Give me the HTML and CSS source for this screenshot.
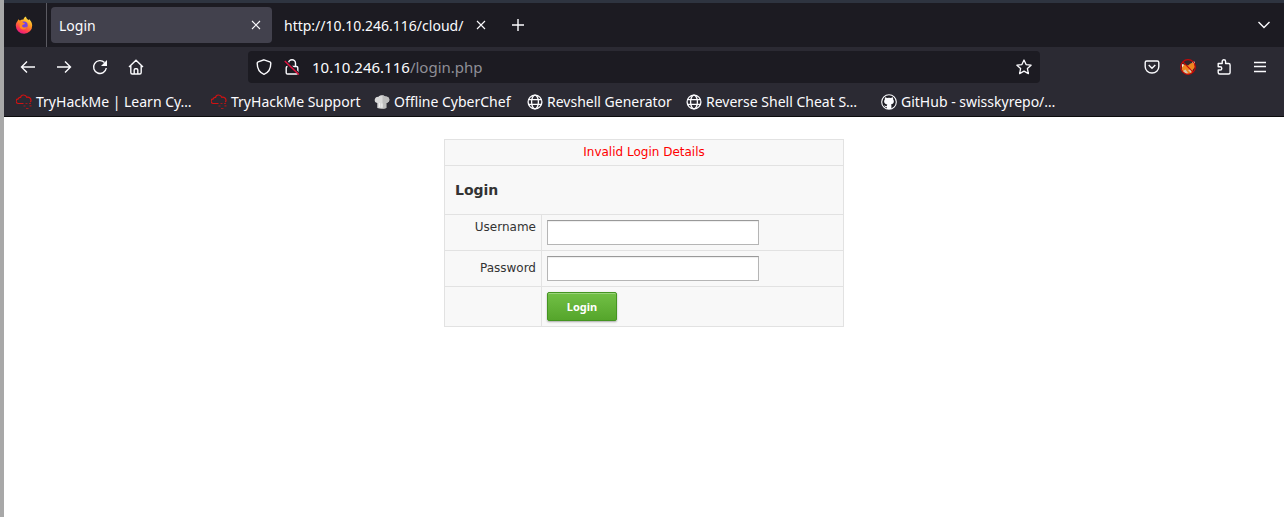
FILE: index.html
```html
<!DOCTYPE html>
<html lang="en">
<head>
<meta charset="utf-8">
<title>Login</title>
<link rel="stylesheet" href="styles.css">
</head>
<body>
<svg class="defs" aria-hidden="true">
  <symbol id="thm" viewBox="0 0 16 16"><g fill="none" stroke="#d01212" stroke-width="1.200"><path d="M7.500 9.500H2.500a2.300 2.300 0 0 1-.2-4.600 2 2 0 0 1 2.300-1.500C5 .5 9.500 0 10.800 3.300c2.200-.6 4.200.8 4.200 3.200q0 1-.8 1.500"/><path d="M9.500 9.500h2M13 9.500h2M7.500 12h2M13.500 11.800h2M10 14.500h2.500" opacity=".75"/></g></symbol>
  <symbol id="globe" viewBox="0 0 16 16"><g fill="none" stroke="#fbfbfe" stroke-width="1.300"><circle cx="8" cy="8" r="6.900"/><ellipse cx="8" cy="8" rx="3.400" ry="6.900"/><path d="M1.500 5.700h13M1.500 10.300h13"/></g></symbol>
  <symbol id="close" viewBox="0 0 10 10"><path d="M1 1l8 8M9 1L1 9" fill="none" stroke="#fbfbfe" stroke-width="1.100"/></symbol>
</svg>
<div class="window">
  <header class="browser">
    <div class="tabs">
      <div class="view">
        <svg width="18" height="18" viewBox="0 0 18 18"><defs><linearGradient id="fire" x1=".8" y1="0" x2=".3" y2="1"><stop offset="0" stop-color="#fff44f"/><stop offset=".4" stop-color="#ff9a1f"/><stop offset=".75" stop-color="#ff3d4f"/><stop offset="1" stop-color="#e31587"/></linearGradient></defs><path d="M3.300 3.200c.5.800 1 1.100 1.600 1.300C6 3.600 7.300 3.300 8.500 3.400 8.700 2 9.800 1 11 .5c0 2 1.600 2.600 2.700 3.800l.3-1.300c2 1.900 3.200 4.200 3.200 6.500a8.200 8.200 0 0 1-16.400.3c0-2.100.7-3.700 1.800-4.800z" fill="url(#fire)"/><circle cx="9" cy="9.300" r="3.700" fill="#7542e5"/><path d="M3.300 5.300C5 4.600 7 5.200 8.300 6.700l1.700.5c-.1 1-1.300 1.200-2.100 1.500-1 .5-1 1.600-.2 2.200 1.300 1 3.400.6 4.400-.4-.5 2.600-3 3.500-5 2.800C4.500 12.500 4 9 5.200 7.300z" fill="#ff8a1e"/></svg>
      </div>
      <div class="tab tab-active"><span>Login</span><button class="icon-button tab-close" aria-label="Close Login"><svg width="10" height="10"><use href="#close"/></svg></button></div>
      <div class="tab tab-other"><span>http://10.10.246.116/cloud/</span><button class="icon-button tab-close" aria-label="Close cloud tab"><svg width="10" height="10"><use href="#close"/></svg></button></div>
      <button class="icon-button new-tab" aria-label="New tab"><svg width="14" height="14" viewBox="0 0 14 14"><path d="M7 1v12M1 7h12" stroke="#fbfbfe" stroke-width="1.400"/></svg></button>
      <button class="icon-button list-tabs" aria-label="List all tabs"><svg width="14" height="14" viewBox="0 0 14 14"><path d="M1.500 4L7 9.500 12.500 4" fill="none" stroke="#fbfbfe" stroke-width="1.400"/></svg></button>
    </div>
    <div class="toolbar">
      <nav class="tools" aria-label="Navigation">
        <button class="icon-button" aria-label="Back"><svg width="16" height="16" viewBox="0 0 16 16"><path d="M15 8H1.500M7 2.500L1.500 8 7 13.500" fill="none" stroke="#fbfbfe" stroke-width="1.400"/></svg></button>
        <button class="icon-button" aria-label="Forward"><svg width="16" height="16" viewBox="0 0 16 16"><path d="M1 8h13.500M9 2.500L14.500 8 9 13.500" fill="none" stroke="#fbfbfe" stroke-width="1.400"/></svg></button>
        <button class="icon-button" aria-label="Reload"><svg width="16" height="16" viewBox="0 0 16 16"><path d="M14.300 9A6.400 6.400 0 1 1 12.500 3.500" fill="none" stroke="#fbfbfe" stroke-width="1.400"/><path d="M15 1v6H9z" fill="#fbfbfe"/></svg></button>
        <button class="icon-button" aria-label="Home"><svg width="16" height="16" viewBox="0 0 16 16"><path d="M1 8l7-6.700L15 8M2.800 6.800v6.700q0 1.500 1.500 1.500h7.400q1.500 0 1.500-1.500V6.800M6.200 15v-4q0-1.200 1.200-1.200h1.200q1.200 0 1.200 1.200v4" fill="none" stroke="#fbfbfe" stroke-width="1.400"/></svg></button>
      </nav>
      <div class="address">
        <svg width="16" height="16" viewBox="0 0 16 16"><path d="M8 .8l5.800 2.100q1 .4 1 1.400C14.800 9 12.800 13.500 8 15.300 3.200 13.500 1.200 9 1.200 4.300q0-1 1-1.400z" fill="none" stroke="#fbfbfe" stroke-width="1.400"/></svg>
        <svg width="16" height="16" viewBox="0 0 16 16"><path d="M4.500 4.200a3.500 3.500 0 0 1 7 0v3.300M3.500 7.500q-1.300 0-1.300 1.300v4.900q0 1.300 1.300 1.300h9q1.300 0 1.300-1.300V8.800q0-1.300-1.300-1.300H8" fill="none" stroke="#fbfbfe" stroke-width="1.400"/><path d="M1.500 1.200l14 13.500" stroke="#1c1b22" stroke-width="1.500"/><path d="M.8 2l14 13.500" stroke="#e2123f" stroke-width="1.500"/></svg>
        <a class="location" href="#">10.10.246.116<span class="path">/login.php</span></a>
        <button class="icon-button" aria-label="Bookmark this page"><svg width="16" height="16" viewBox="0 0 16 16"><path d="M8 1l2.100 4.600 5 .6-3.700 3.400 1 5L8 12.100l-4.400 2.500 1-5L.9 6.200l5-.6z" fill="none" stroke="#fbfbfe" stroke-width="1.300" stroke-linejoin="round"/></svg></button>
      </div>
      <div class="tools tools-right">
        <button class="icon-button" aria-label="Save to Pocket"><svg width="16" height="16" viewBox="0 0 16 16"><path d="M2.700 2h10.600q1.500 0 1.500 1.500v4.200a6.800 6.300 0 0 1-13.600 0V3.500Q1.200 2 2.700 2zM4.700 6L8 9.200 11.300 6" fill="none" stroke="#fbfbfe" stroke-width="1.400"/></svg></button>
        <button class="icon-button" aria-label="Proxy"><svg width="16" height="16" viewBox="0 0 16 16"><circle cx="8" cy="8" r="7.500" fill="#33262c"/><path d="M2 7l2-1.500 4 1 2.500-2L14.500 3l.5 5-2 2.500-1 3.500-4 1.500-4-1.500-2-3z" fill="#ee861f"/><path d="M1.500 5l2.500.5-1.500 3zM12 3l2.500-.5.500 3.500z" fill="#fff2dc"/><path d="M3 12l2.500-1.500L8 14l-1.500 1.200zM8 11l3.500-1-.5 4z" fill="#d8c7ac"/><circle cx="8" cy="8" r="7.300" fill="none" stroke="#c70808" stroke-width="1.200"/><path d="M2.800 2.800l10.400 10.400" stroke="#c70808" stroke-width="1.200"/></svg></button>
        <button class="icon-button" aria-label="Extensions"><svg width="16" height="16" viewBox="0 0 16 16"><path d="M2.200 4.500h4V2.400a1.700 1.700 0 0 1 3.400 0v2.100h3q1.500 0 1.500 1.500v7.500q0 1.500-1.500 1.500H3.700q-1.500 0-1.500-1.500V11h2a1.600 1.600 0 0 0 0-3.200h-2z" fill="none" stroke="#fbfbfe" stroke-width="1.400" stroke-linejoin="round"/></svg></button>
        <button class="icon-button" aria-label="Open menu"><svg width="16" height="16" viewBox="0 0 16 16"><path d="M2 3.500h12M2 7.500h12M2 12.500h12" stroke="#fbfbfe" stroke-width="1.400"/></svg></button>
      </div>
    </div>
    <nav class="bookmarks" aria-label="Bookmarks">
      <a href="#"><svg width="16" height="16"><use href="#thm"/></svg>TryHackMe | Learn Cy…</a>
      <a href="#"><svg width="16" height="16"><use href="#thm"/></svg>TryHackMe Support</a>
      <a href="#"><svg width="16" height="16" viewBox="0 0 16 16"><path d="M3.300 14V9C1 8.500.4 7 .8 5.200 1.300 3.200 3 2.500 4.600 2.700 5.500 1 9.500.6 11 2.500c2-.4 4 .6 4.300 2.700.2 2-1 3.500-3 3.800V14q-4.500 1.500-9 0z" fill="#d9d9d9"/><path d="M8.500 1.500q1.700 0 2.500 1c2-.4 4 .6 4.300 2.700.2 2-1 3.500-3 3.800V14q-1.500.7-3.800.7z" fill="#bdbdbd"/><path d="M5.500 9v4M8 9.500v4" stroke="#f2f2f2"/></svg>Offline CyberChef</a>
      <a href="#"><svg width="16" height="16"><use href="#globe"/></svg>Revshell Generator</a>
      <a href="#"><svg width="16" height="16"><use href="#globe"/></svg>Reverse Shell Cheat S…</a>
      <a href="#"><svg width="16" height="16" viewBox="0 0 16 16"><circle cx="8" cy="8" r="7.300" fill="#1c1b22" stroke="#fbfbfe" stroke-width="1.100"/><path d="M4 3.300c.8 0 1.500.4 2 .8q2-.5 4 0c.5-.4 1.200-.8 2-.8.3.8.2 1.500.1 1.900 1.600 2.100.7 5-2.200 5.200.5.500.5 1 .5 1.700V15H5.800v-1.900c-1.600.3-2-.4-2.500-1.300l-.6-.6c1.200-.2 1.500 1.300 3.100.9 0-.7.200-1.200.5-1.600C3.200 10 2.300 7.300 3.900 5.200c-.2-.4-.2-1.100.1-1.900z" fill="#fbfbfe"/></svg>GitHub - swisskyrepo/…</a>
    </nav>
  </header>
  <main class="page">
    <form onsubmit="return false">
      <table class="login">
        <tr><td class="message" colspan="2">Invalid Login Details</td></tr>
        <tr><td class="title" colspan="2"><h1>Login</h1></td></tr>
        <tr><td class="label label-top"><label for="user">Username</label></td><td><input class="field" id="user" type="text"></td></tr>
        <tr><td class="label"><label for="pass">Password</label></td><td><input class="field" id="pass" type="password"></td></tr>
        <tr><td></td><td><button class="submit" type="submit">Login</button></td></tr>
      </table>
    </form>
  </main>
</div>
</body>
</html>
```
FILE: styles.css
```css
* { box-sizing: border-box; }
body { margin: 0; background: #fff; }
svg { display: block; flex: none; }
.defs { position: absolute; width: 0; height: 0; }

.window { min-height: 100vh; border-left: 4px solid #a8a8a8; }
.browser {
  background: #2b2a33;
  border-top: 3px solid #2e3440;
  border-bottom: 1px solid #0c0c0d;
  color: #fbfbfe;
  font: 14px/20px "Noto Sans", sans-serif;
  white-space: nowrap;
}
.icon-button {
  display: flex;
  align-items: center;
  justify-content: center;
  flex: none;
  padding: 0;
  border: 0;
  background: none;
}

.tabs { display: flex; align-items: center; height: 44px; background: #1c1b22; }
.view {
  display: flex;
  align-items: center;
  align-self: stretch;
  width: 43px;
  margin-right: 4px;
  padding-left: 11px;
  border-right: 1px solid #5b5a62;
}
.tab { display: flex; align-items: center; justify-content: space-between; height: 36px; padding: 0 8px; border-radius: 4px; }
.tab-active { width: 221px; padding-right: 11px; background: #42414d; }
.tab-other { width: 222px; padding: 0 8px 0 12px; }
.tab span { line-height: 22px; padding-top: 2px; }
.new-tab { width: 28px; height: 28px; margin-left: 10px; }
.list-tabs { width: 28px; height: 28px; margin: 0 6px 0 auto; }

.toolbar { display: grid; grid-template-columns: 244px 1fr 244px; align-items: center; height: 40px; }
.tools { display: flex; padding: 0 6px; }
.tools-right { justify-content: flex-end; }
.tools .icon-button { width: 36px; height: 32px; }
.address {
  display: flex;
  align-items: center;
  gap: 12px;
  height: 32px;
  padding: 0 8px;
  border-radius: 4px;
  background: #1c1b22;
}
.location { flex: 1; color: #fbfbfe; font-size: 15px; text-decoration: none; }
.path { color: #8f8f97; }

.bookmarks {
  display: grid;
  grid-template-columns: 195px 163px 153px 159px 195px auto;
  align-items: center;
  height: 29px;
  padding-left: 12px;
}
.bookmarks a { display: flex; align-items: center; gap: 4px; color: #fbfbfe; text-decoration: none; }

.page { padding: 22px 0; font: 12px/15px "DejaVu Sans", sans-serif; color: #333; }
.login { width: 400px; margin: 0 auto; border-collapse: collapse; background: #f8f8f8; }
.login td { padding: 5px; border: 1px solid #e2e2e2; }
.login .message { color: #f00; text-align: center; }
.login .title { padding: 16px 10px; }
.login h1 { margin: 0; font-size: 14px; line-height: 16px; }
.login .label { width: 97px; text-align: right; }
.login .label-top { vertical-align: top; }
.field {
  display: block;
  width: 212px;
  height: 25px;
  padding: 4px;
  border: 1px solid #b5b5b5;
  border-top-color: #999;
  background: #fff;
  box-shadow: inset 0 1px 1px #eee;
  font: inherit;
}
.submit {
  display: block;
  width: 70px;
  height: 29px;
  padding: 0;
  border: 1px solid #459522;
  border-radius: 2px;
  background: linear-gradient(#72c046, #55a52b);
  box-shadow: inset 0 1px 0 #9bd27c, 0 1px 2px #aaa;
  color: #fff;
  font: bold 11px/16px "Noto Sans", sans-serif;
}
```
